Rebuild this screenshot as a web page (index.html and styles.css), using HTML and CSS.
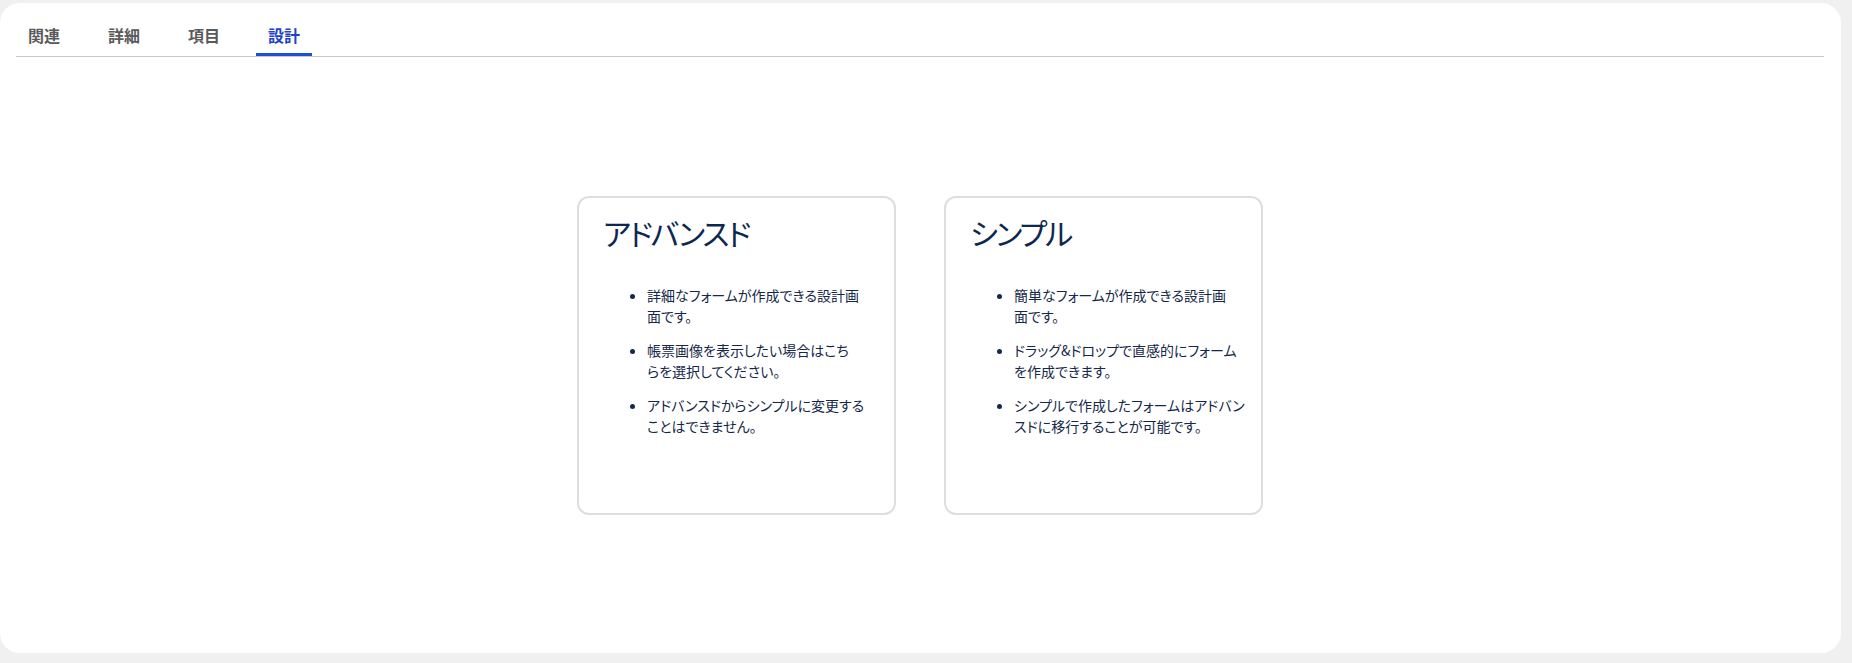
FILE: index.html
```html
<!DOCTYPE html>
<html lang="ja">
<head>
    <meta charset="UTF-8">
    <meta name="viewport" content="width=device-width, initial-scale=1.0">
    <title>設計</title>
    <link rel="stylesheet" href="styles.css">
</head>
<body>

    <div class="panel">
        <!-- Tabs -->
        <div class="tabs">
            <div class="tab">関連</div>
            <div class="tab">詳細</div>
            <div class="tab">項目</div>
            <div class="tab active">設計</div>
        </div>

        <!-- Design mode cards -->
        <div class="modes">
            <div class="mode-card">
                <h2>アドバンスド</h2>
                <ul>
                    <li>詳細なフォームが作成できる設計画<br>面です。</li>
                    <li>帳票画像を表示したい場合はこち<br>らを選択してください。</li>
                    <li>アドバンスドからシンプルに変更する<br>ことはできません。</li>
                </ul>
            </div>
            <div class="mode-card">
                <h2>シンプル</h2>
                <ul>
                    <li>簡単なフォームが作成できる設計画<br>面です。</li>
                    <li>ドラッグ&amp;ドロップで直感的にフォーム<br>を作成できます。</li>
                    <li>シンプルで作成したフォームはアドバン<br>スドに移行することが可能です。</li>
                </ul>
            </div>
        </div>
    </div>

</body>
</html>
```

FILE: styles.css
```css
body {
    font-family: 'Noto Sans CJK JP', 'Noto Sans', sans-serif;
    margin: 0;
    padding: 3px 11px 10px 0;
    background: #f0f0f0;
}
.panel {
    background: white;
    height: 650px;
    box-sizing: border-box;
    padding: 13px 17px 0 16px;
    border-radius: 20px;
    display: flex;
    flex-direction: column;
}
.tabs {
    display: flex;
    gap: 24px;
    border-bottom: 1px solid #c8c8c8;
}
.tab {
    font-size: 16px;
    font-weight: bold;
    line-height: 22px;
    color: #5a5a5a;
    padding: 8px 12px 7px;
    border-bottom: 3px solid transparent;
    cursor: pointer;
}
.tab.active {
    color: #1f43c8;
    border-bottom-color: #1a4fd8;
}
.modes {
    flex: 1;
    display: flex;
    justify-content: center;
    align-items: center;
    gap: 48px;
}
.mode-card {
    width: 319px;
    height: 319px;
    box-sizing: border-box;
    border: 2px solid #dedede;
    border-radius: 12px;
    padding: 16px 10px 0 24px;
    color: #16284a;
    font-feature-settings: "palt";
}
.mode-card h2 {
    margin: 0;
    font-size: 30px;
    font-weight: normal;
    line-height: 36px;
    letter-spacing: -2px;
    color: #0c2850;
}
.mode-card ul {
    margin: 35px 0 0;
    padding-left: 44px;
    font-size: 14px;
    line-height: 21px;
    white-space: nowrap;
}
.mode-card li {
    margin-bottom: 13px;
}
```
